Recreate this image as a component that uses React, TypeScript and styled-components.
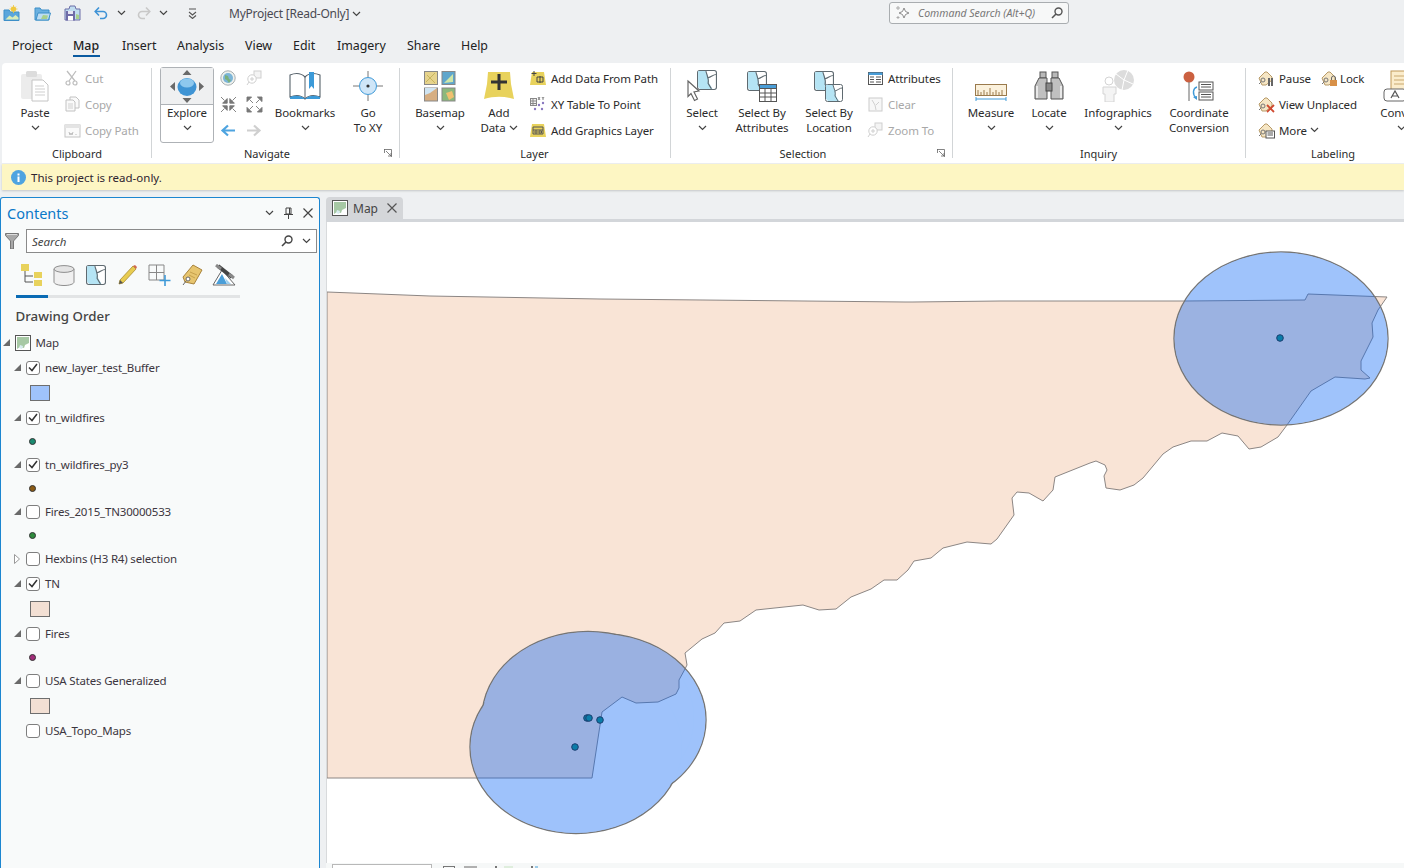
import React from "react";
import styled, { createGlobalStyle } from "styled-components";

const Global = createGlobalStyle`
  html, body { margin: 0; padding: 0; overflow: hidden; background: #eef0f2; }
  body { font-family: "Noto Sans", "Open Sans", Arial, sans-serif; font-size: 12px; color: #333; }
`;

const Page = styled.div`
  width: 1404px; height: 868px; overflow: hidden; display: flex; flex-direction: column; background: #eef0f2;
`;
const TitleBar = styled.div`
  height: 28px; display: grid; grid-template-columns: 229px 660px 180px; align-items: center; flex: none;
`;
const Qat = styled.div`display: flex; align-items: center; padding-left: 3px; margin-top: -2px;`;
const QatSlot = styled.div<{ $w: number }>`width: ${p => p.$w}px; display: flex; align-items: center; height: 20px;`;
const ProjectTitle = styled.div`display: flex; align-items: center; gap: 3px; color: #4a4a52; font-size: 12px; letter-spacing: -0.25px; margin-top: -1px;`;
const CommandSearch = styled.div`
  height: 22px; margin-top: -3px; box-sizing: border-box; border: 1px solid #a9adb0; border-radius: 3px; background: #f7f8f8;
  display: flex; align-items: center; padding: 0 5px; gap: 7px; color: #777; font-style: italic; font-size: 10.5px;
  span { flex: 1; }
`;
const MenuBar = styled.div`height: 35px; display: flex; padding-left: 12px; flex: none;`;
const MenuTab = styled.div<{ $w: number; $active?: boolean }>`
  width: ${p => p.$w}px; height: 100%; padding-top: 9px; box-sizing: border-box; font-size: 12.4px; color: #222; position: relative;
  line-height: 18px; font-weight: ${p => (p.$active ? 500 : 400)};
  ${p => p.$active && `&::after { content: ""; position: absolute; left: 0; width: 27px; top: 27px; height: 2px; background: #0a5aa0; }`}
`;
const Ribbon = styled.div`
  height: 100px; margin-left: 2px; background: #fff; display: flex; flex: none; overflow: hidden; border-radius: 4px 0 0 0; color: #2b2b2b;
`;
const Group = styled.div<{ $w: number; $pl?: number; $last?: boolean }>`
  width: ${p => p.$w}px; flex: none; position: relative; display: flex; flex-direction: column; box-sizing: border-box;
  padding-left: ${p => p.$pl || 0}px;
  ${p => !p.$last && `&::after { content: ""; position: absolute; right: 0; top: 5px; bottom: 5px; width: 1px; background: #d2d5d7; }`}
`;
const GroupBody = styled.div`height: 83px; padding-top: 2px; box-sizing: border-box; display: flex;`;
const GroupLabel = styled.div<{ $pl?: number; $pr?: number }>`
  height: 16px; line-height: 16px; text-align: center; font-size: 11px; color: #2b2b2b;
  margin-left: ${p => (p.$pl ? -p.$pl : 0)}px; padding-right: ${p => p.$pr || 0}px;
`;
const Launcher = styled.div`position: absolute; right: 8px; top: 86px; width: 8px; height: 8px;`;
const LargeButton = styled.div<{ $w: number }>`
  width: ${p => p.$w}px; flex: none; display: flex; flex-direction: column; align-items: center; padding-top: 2px; text-align: center;
  font-size: 11.5px; line-height: 15px; color: #2b2b2b; white-space: nowrap; letter-spacing: -0.07px;
`;
const IconSlot = styled.div`height: 38px; display: flex; align-items: center; justify-content: center;`;
const ChevronRow = styled.div`height: 15px; display: flex; align-items: center; justify-content: center;`;
const InlineLabel = styled.div<{ $ml?: number }>`display: flex; align-items: center; gap: 3px; margin-left: ${p => p.$ml || 0}px;`;
const ExploreButton = styled.div`
  width: 54px; height: 76px; margin-top: 2px; box-sizing: border-box; border: 1px solid #aeb2b6; border-radius: 3px;
  display: flex; flex-direction: column; align-items: center; font-size: 11.5px; line-height: 15px; flex: none; background: #fff; letter-spacing: -0.07px;
`;
const ExploreTop = styled.div`
  width: 100%; height: 36px; background: #eff0f1; border-bottom: 1px solid #aeb2b6; display: flex; align-items: center; justify-content: center;
`;
const NavGrid = styled.div`margin-left: 1px; width: 52px; display: grid; grid-template-columns: 26px 26px; grid-auto-rows: 26px; place-items: center; flex: none;`;
const SmallCol = styled.div<{ $ml?: number }>`margin-left: ${p => p.$ml || 0}px; display: flex; flex-direction: column; flex: none;`;
const SmallRow = styled.div<{ $off?: boolean }>`
  height: 26px; display: flex; align-items: center; gap: 5px; font-size: 11.5px; letter-spacing: -0.1px; white-space: nowrap; color: ${p => (p.$off ? "#a8a8a8" : "#2b2b2b")};
`;
const SmallIcon = styled.div`width: 16px; height: 16px; display: flex; align-items: center; justify-content: center; flex: none;`;
const Notice = styled.div`
  margin: 1px 0 0 2px; height: 26px; background: #fdf6c3; display: flex; align-items: center; padding-left: 9px; gap: 5px; flex: none;
  font-size: 11.5px; color: #2e2430; box-shadow: 0 1px 2px #c4c6c8;
`;
const Body = styled.div`flex: 1; min-height: 0; display: flex; margin-top: 7px;`;
const Pane = styled.div`
  width: 320px; flex: none; box-sizing: border-box; border: 1.5px solid #1c86d0; border-bottom: none; border-radius: 3px 3px 0 0; background: #f8fafa;
  display: flex; flex-direction: column;
`;
const PaneHead = styled.div`height: 31px; display: flex; align-items: center; padding: 0 6px 2px 6px; flex: none; box-sizing: border-box;`;
const PaneTitle = styled.div`flex: 1; color: #0a78c8; font-size: 14.5px;`;
const PaneTools = styled.div`display: flex; align-items: center; gap: 10px;`;
const SearchRow = styled.div`display: flex; align-items: center; height: 24px; padding: 0 2.5px 0 4px; gap: 7px; flex: none;`;
const SearchBox = styled.div`
  flex: 1; height: 24px; box-sizing: border-box; background: #fff; border: 1px solid #8a8a8a; display: flex; align-items: center; padding: 0 5px; gap: 9px;
  font-style: italic; color: #444; font-size: 11.5px;
  span { flex: 1; }
`;
const ViewTabs = styled.div`margin: 8px 0 0 14.5px; width: 224px; height: 34px; display: flex; border-bottom: 3px solid #e2e4e5; position: relative; flex: none;
  &::after { content: ""; position: absolute; left: 0; width: 32px; bottom: -3px; height: 3px; background: #0a6bb4; }
`;
const ViewTab = styled.div`width: 32px; height: 28px; display: flex; align-items: center; justify-content: center; flex: none;`;
const PaneSection = styled.div`margin: 6px 0 0 14.5px; height: 24px; line-height: 24px; font-size: 13.3px; font-weight: 500; color: #444; flex: none;`;
const Tree = styled.div`margin-top: 2px; display: flex; flex-direction: column;`;
const Row = styled.div<{ $depth: number }>`
  height: 25px; display: flex; align-items: center; padding-left: ${p => (p.$depth ? 13 : 2)}px; font-size: 11.5px; letter-spacing: -0.18px; color: #3c3640; flex: none;
`;
const Twist = styled.div`width: 11.5px; height: 10px; display: flex; align-items: center; justify-content: flex-start; flex: none;`;
const MapIconWrap = styled.div`margin-right: 5px; flex: none;`;
const Check = styled.div`
  width: 14px; height: 14px; box-sizing: border-box; border: 1px solid #7e7e7e; border-radius: 3px; background: #fff; display: flex; align-items: center; justify-content: center; margin-right: 5.5px; flex: none;
`;
const SwatchRow = styled.div`height: 25px; display: flex; align-items: center; padding-left: 28.5px; flex: none;`;
const Swatch = styled.div<{ $c: string }>`width: 20px; height: 16px; box-sizing: border-box; border: 1px solid #6e6e6e; background: ${p => p.$c};`;
const DotRow = styled.div`height: 22px; display: flex; align-items: center; padding-left: 28px; flex: none;`;
const Dot = styled.div<{ $c: string }>`width: 7px; height: 7px; border-radius: 50%; box-sizing: border-box; border: 1px solid #333; background: ${p => p.$c};`;
const MapPane = styled.div`flex: 1; min-width: 0; margin-left: 6px; display: flex; flex-direction: column;`;
const TabStrip = styled.div`height: 25px; box-sizing: border-box; border-bottom: 3px solid #d3d6da; flex: none; display: flex;`;
const DocTab = styled.div`
  width: 77px; height: 22px; background: #d4d6d9; border-radius: 4px 4px 0 0; display: flex; align-items: center; padding: 0 6px; box-sizing: border-box; gap: 5px; color: #444; font-size: 12px;
  span { flex: 1; }
`;
const MapCanvas = styled.div`height: 641px; background: #fff; flex: none; border-left: 1px solid #d8dadc; svg { display: block; }`;
const StatusBar = styled.div`height: 24px; background: #f6f8f8; display: flex; padding: 1px 0 0 6px; flex: none;`;
const ScaleBox = styled.div`width: 100px; height: 20px; box-sizing: border-box; border: 1px solid #b8b8b8; background: #fff;`;
const StatusIcon = styled.div<{ $c: string; $w: number; $ml: number; $fill?: boolean }>`
  width: ${p => p.$w}px; height: 14px; margin: 2px 0 0 ${p => p.$ml}px; box-sizing: border-box; border: 1px solid ${p => p.$c};
  background: ${p => (p.$fill ? p.$c : "transparent")};
`;
const IcSvg = styled.svg`display: block; flex: none;`;

type IP = { w: number; h: number; children?: React.ReactNode };
const Ic = ({ w, h, children }: IP) => (
  <IcSvg width={w} height={h} viewBox={`0 0 ${w} ${h}`} fill="none">{children}</IcSvg>
);
const Chevron = ({ c = "#444" }: { c?: string }) => (
  <Ic w={9} h={6}><path d="M1 1l3.5 3.5L8 1" stroke={c} strokeWidth="1.2" /></Ic>
);
const NewProjectIcon = () => (
  <Ic w={17} h={16}>
    <path d="M1 5h5l1.5 2H16v8.5H1z" fill="#5aa6dc" stroke="#3d8fc8" />
    <circle cx="10.5" cy="4" r="2.6" fill="#f0c83c" />
    <path d="M10.5 0v8M6.5 4h8M8 1.5l5 5M13 1.5l-5 5" stroke="#f0c83c" strokeWidth=".8" />
    <path d="M2.5 14.5l4-4 3 2 3-2.5 3 2.5v2z" fill="#d8ecb8" />
  </Ic>
);
const OpenProjectIcon = () => (
  <Ic w={17} h={16}>
    <path d="M1 3h5l1.5 2H15v10H1z" fill="#6ab0e0" stroke="#3d8fc8" />
    <path d="M2 15l2-7h12.5l-2 7z" fill="#bcdcf2" stroke="#3d8fc8" />
    <path d="M9 10l5 .5-1 3.5H7z" fill="#a8d08c" />
  </Ic>
);
const SaveIcon = () => (
  <Ic w={17} h={16}>
    <path d="M1 4h4l1-3h5l1 3h4v11H1z" fill="#bfdcf0" stroke="#6d6fa8" />
    <rect x="2" y="6" width="9" height="9.5" fill="#6f6ca8" />
    <rect x="4" y="6" width="5" height="3" fill="#e6e6f4" />
    <rect x="4" y="11" width="5" height="4.5" fill="#fff" />
    <path d="M12 9l3 1v4h-3z" fill="#a8d08c" />
  </Ic>
);
const UndoIcon = ({ c, flip }: { c: string; flip?: boolean }) => (
  <Ic w={14} h={14}>
    <g transform={flip ? "translate(14 0) scale(-1 1)" : undefined}>
      <path d="M1.5 5.5H9a3.5 3.5 0 0 1 0 7H6" stroke={c} strokeWidth="1.6" />
      <path d="M5 1.5L1.2 5.5 5 9.5" stroke={c} strokeWidth="1.6" />
    </g>
  </Ic>
);
const CustomizeIcon = () => (
  <Ic w={9} h={11}><path d="M1 1h7M1 4l3.5 3L8 4M1 7.5l3.5 3 3.5-3" stroke="#555" strokeWidth="1.1" /></Ic>
);
const Sparkle = () => (
  <Ic w={16} h={15}>
    <path d="M9 3l1.5 3.5L14 8l-3.5 1.5L9 13 7.5 9.5 4 8l3.5-1.5z" stroke="#8c8c8c" fill="#fff" />
    <path d="M3 1v4M1 3h4M3 11v3M1.5 12.5h3" stroke="#aaa" />
  </Ic>
);
const SearchGlyph = ({ c = "#555" }: { c?: string }) => (
  <Ic w={12} h={12}><circle cx="7.5" cy="4.5" r="3.5" stroke={c} strokeWidth="1.4" /><path d="M5 7l-4 4" stroke={c} strokeWidth="1.6" /></Ic>
);
const PasteIcon = () => (
  <Ic w={30} h={32}>
    <rect x="1" y="4" width="21" height="25" rx="2" fill="#ececec" />
    <rect x="6" y="1" width="11" height="6" rx="1.5" fill="#dcdcdc" />
    <path d="M12 10h11l5 5v16H12z" fill="#fff" stroke="#c4c4c4" />
    <path d="M15 16h9M15 19h10M15 22h10M15 25h10" stroke="#cfcfcf" />
  </Ic>
);
const CutIcon = () => (
  <Ic w={14} h={16}>
    <path d="M2 1l8 10M11 1L4 11" stroke="#bdbdbd" strokeWidth="1.3" />
    <circle cx="3" cy="13" r="2" stroke="#bdbdbd" strokeWidth="1.2" /><circle cx="10" cy="13" r="2" stroke="#bdbdbd" strokeWidth="1.2" />
  </Ic>
);
const CopyIcon = () => (
  <Ic w={15} h={16}>
    <path d="M5 1h6l3 3v8H5z" fill="#fafafa" stroke="#c2c2c2" />
    <path d="M1 4h7l2 2v9H1z" fill="#fafafa" stroke="#c2c2c2" />
    <path d="M3 8h5M3 10h5M3 12h5" stroke="#d0d0d0" />
  </Ic>
);
const CopyPathIcon = () => (
  <Ic w={17} h={16}>
    <rect x="1" y="3" width="15" height="12" fill="#fafafa" stroke="#c4c4c4" />
    <path d="M1 3h15v3H1z" fill="#e4e4e4" /><path d="M5 10l1 3 1-2 1 2 1-3M12 12v1" stroke="#bcbcbc" />
  </Ic>
);
const ExploreIcon = () => (
  <Ic w={34} h={33}>
    <path d="M17 0l4.5 5h-9zM17 33l-4.5-5h9zM0 16.5L5 12v9zM34 16.5L29 12v9z" fill="#6a6a6a" />
    <ellipse cx="17" cy="17" rx="9.5" ry="9" fill="#3f94d4" />
    <ellipse cx="17" cy="13" rx="7" ry="4.5" fill="#8ec8ee" />
  </Ic>
);
const GlobeIcon = () => (
  <Ic w={16} h={16}>
    <circle cx="8" cy="8" r="7.2" fill="#eef2ee" stroke="#a8aeb0" />
    <circle cx="8" cy="8" r="5" fill="#7cb5d8" /><path d="M5 5l3 1 1 3 2 1-2 3-2-3-2-1z" fill="#7ab07a" />
  </Ic>
);
const ZoomOffIcon = () => (
  <Ic w={16} h={16}>
    <rect x="8" y="1" width="7" height="7" fill="#f4f4f4" stroke="#cfcfcf" />
    <circle cx="6" cy="9" r="4.2" fill="#fff" stroke="#cfcfcf" /><path d="M4 9h4M6 7v4M3 12l-2 3" stroke="#cfcfcf" />
  </Ic>
);
const ZoomArrows = ({ out }: { out?: boolean }) => (
  <Ic w={17} h={17}>
    {[0, 90, 180, 270].map(a => (
      <g key={a} transform={`rotate(${a} 8.5 8.5)`}>
        {out ? (
          <path d="M1 1h4.6L1 5.6zM3.5 3.5L7 7" fill="#777" stroke="#777" strokeWidth=".9" />
        ) : (
          <path d="M7.2 7.2H2.6L7.2 2.6zM1 1l3.5 3.5" fill="#777" stroke="#777" strokeWidth=".9" />
        )}
      </g>
    ))}
  </Ic>
);
const NavArrow = ({ c, right }: { c: string; right?: boolean }) => (
  <Ic w={16} h={13}>
    <path d={right ? "M1 6.5h12M8 1.5l5.5 5-5.5 5" : "M15 6.5H3M8 1.5l-5.5 5 5.5 5"} stroke={c} strokeWidth="2.2" />
  </Ic>
);
const BookIcon = () => (
  <Ic w={32} h={30}>
    <path d="M16 6C12 2 6 2 1 4v22c5-2 11-2 15 2 4-4 10-4 15-2V4c-5-2-11-2-15 2z" fill="#fff" stroke="#55616a" strokeWidth="1.1" />
    <path d="M16 6v22" stroke="#55616a" />
    <path d="M1 26c5-2 11-2 15 2 4-4 10-4 15-2v2H1z" fill="#3c9ad8" />
    <path d="M20 1h5v17l-2.5-3-2.5 3z" fill="#3c9ad8" />
  </Ic>
);
const GoToIcon = () => (
  <Ic w={32} h={32}>
    <path d="M16 1v6M16 25v6M1 16h6M25 16h6" stroke="#777" />
    <circle cx="16" cy="16" r="8.5" fill="#cfe6f8" stroke="#3f9ad8" />
    <circle cx="16" cy="16" r="1.6" fill="#333" />
  </Ic>
);
const BasemapIcon = () => (
  <Ic w={32} h={31}>
    <rect x=".5" y=".5" width="13" height="13" fill="#e6d38c" stroke="#888" /><path d="M2 11L11 2M3 4l8 8" stroke="#c6b45c" />
    <rect x="18" y=".5" width="13" height="13" fill="#5fa6cc" stroke="#888" /><path d="M20 12l9-9v8z" fill="#cfe6a8" />
    <rect x=".5" y="17" width="13" height="13" fill="#d6ae82" stroke="#888" /><path d="M1 24l5-2 7-5H1z" fill="#cfe4f2" />
    <rect x="18" y="17" width="13" height="13" fill="#8cb87c" stroke="#888" /><path d="M22 22l6-2 2 6-5 3z" fill="#f0c070" />
  </Ic>
);
const AddDataIcon = () => (
  <Ic w={30} h={30}>
    <path d="M4 1h22l1 12 3 15c-10-3-20-3-30 0l3-15z" fill="#e8d25c" />
    <path d="M15 3v16M7 11h16" stroke="#333" strokeWidth="3" />
  </Ic>
);
const TinyYellow = ({ kind }: { kind: number }) => (
  <Ic w={16} h={16}>
    <path d="M2 2h12l2 13H0z" fill="#e8d25c" />
    {kind === 0 && <path d="M4 1v5M1.5 3.5h5M7 7h6v5H7zM10 6v7" stroke="#444" />}
    {kind === 1 && <g><path d="M3 5h10v7H3zM3 8h10" stroke="#555" /><circle cx="6" cy="10" r="1.2" stroke="#555" /><path d="M9 9h2.5v2H9z" stroke="#555" /></g>}
  </Ic>
);
const XYIcon = () => (
  <Ic w={16} h={16}>
    <rect x="0.5" y="2.5" width="6" height="7" fill="#f0f0f0" stroke="#888" /><path d="M.5 5h6M.5 7.5h6M3 2.5v7" stroke="#888" />
    <circle cx="9" cy="9" r="1.2" fill="#8a78c0" /><circle cx="13" cy="7" r="1.2" fill="#8a78c0" /><circle cx="5" cy="13" r="1.2" fill="#8a78c0" /><circle cx="12" cy="13" r="1.2" fill="#8a78c0" />
    <path d="M8 1l2 3M10 1L8 4M12 1l1 1.5 1-1.5M13 2.5V4" stroke="#666" strokeWidth=".8" />
  </Ic>
);
const MiniMap = ({ s = 18, x = 0, y = 0 }: { s?: number; x?: number; y?: number }) => (
  <g transform={`translate(${x} ${y}) scale(${s / 18})`}>
    <rect x=".5" y=".5" width="17" height="17" rx="2" fill="#fff" stroke="#5f6a70" />
    <path d="M1 1h7l2 5 1 6 3 5H3l-2-2z" fill="#b5e4f4" />
    <path d="M8 1c1 4 3 7 2 11l3 5M10 7c3-1 5-3 7-3" stroke="#5f6a70" />
  </g>
);
const SelectIcon = () => (
  <Ic w={30} h={32}>
    <MiniMap s={20} x={10} y={0} />
    <path d="M1 11l11 10-5 1 3.5 7-3 1.5-3.5-7-3 3z" fill="#fff" stroke="#666" strokeWidth="1.2" />
  </Ic>
);
const TableMini = ({ x, y }: { x: number; y: number }) => (
  <g transform={`translate(${x} ${y})`}>
    <rect x=".5" y=".5" width="17" height="17" fill="#fff" stroke="#555" />
    <rect x=".5" y=".5" width="17" height="4" fill="#4a9ed8" stroke="#555" />
    <path d="M.5 9h17M.5 13h17M6 5v13M12 5v13" stroke="#555" />
  </g>
);
const SbaIcon = () => <Ic w={32} h={33}><MiniMap s={20} x={1} y={1} /><TableMini x={13} y={14} /></Ic>;
const SblIcon = () => <Ic w={32} h={33}><MiniMap s={20} x={1} y={1} /><MiniMap s={18} x={12} y={14} /></Ic>;
const AttributesIcon = () => (
  <Ic w={15} h={13}>
    <rect x=".5" y=".5" width="14" height="12" fill="#fff" stroke="#555" /><rect x=".5" y=".5" width="14" height="2.5" fill="#4a9ed8" />
    <path d="M2 5h4M8 5h5M2 7.5h4M8 7.5h5M2 10h4M8 10h5" stroke="#555" />
  </Ic>
);
const ClearIcon = () => (
  <Ic w={15} h={15}><rect x="1" y="1" width="13" height="13" stroke="#ccc" fill="#f7f7f7" /><path d="M4 3l3 5 1 5M8 8l3-3" stroke="#d0d0d0" /></Ic>
);
const RulerIcon = () => (
  <Ic w={32} h={30}>
    <rect x=".5" y="13.5" width="31" height="11" fill="#fbf1dc" stroke="#9a7a4c" />
    <path d="M3 24v-5M6 24v-3M9 24v-5M12 24v-3M15 24v-7M18 24v-3M21 24v-5M24 24v-3M27 24v-5" stroke="#9a7a4c" />
    <path d="M1 28h30M1 26v4M31 26v4" stroke="#3f9ad8" />
  </Ic>
);
const BinocularsIcon = () => (
  <Ic w={30} h={30}>
    <rect x="6" y="1" width="6" height="6" fill="#b8b8b8" stroke="#555" /><rect x="18" y="1" width="6" height="6" fill="#b8b8b8" stroke="#555" />
    <path d="M5 7h8v21H1V15zM25 7h-8v21h12V15z" fill="#c0c0c0" stroke="#555" />
    <rect x="12" y="12" width="6" height="8" fill="#888" stroke="#444" />
    <path d="M3 15v12M27 15v12" stroke="#e8e8e8" strokeWidth="2" />
  </Ic>
);
const InfographicsIcon = () => (
  <Ic w={32} h={32}>
    <circle cx="22" cy="10" r="10" fill="#dcdcdc" />
    <path d="M22 10L14 4M22 10l4-10M22 10l9 4M22 10l-2 10" stroke="#fff" />
    <circle cx="7" cy="11" r="4" fill="#fff" stroke="#d4d4d4" />
    <path d="M1 17h13v7h-2v8H3v-8H1z" fill="#f4f4f4" stroke="#d4d4d4" />
  </Ic>
);
const CoordIcon = () => (
  <Ic w={32} h={31}>
    <circle cx="6" cy="6" r="5.5" fill="#cb6040" /><path d="M6 11v19" stroke="#666" />
    <rect x="16" y="11" width="14" height="8" fill="#fff" stroke="#555" /><path d="M18 13.5h10M18 16h10" stroke="#555" />
    <rect x="16" y="21" width="14" height="8" fill="#fff" stroke="#555" /><path d="M18 23.5h10M18 26h10" stroke="#555" />
    <path d="M14 16c-4 1-5 7-1 11" stroke="#3f9ad8" strokeWidth="1.4" /><path d="M10 26l4 3v-4z" fill="#3f9ad8" />
  </Ic>
);
const TagIcon = ({ extra }: { extra: "pause" | "lock" | "x" | "list" }) => (
  <Ic w={17} h={17}>
    <path d="M1 8l6-6h2l5 5v3l-6 5H4z" fill="#f6e6c4" stroke="#b79a68" />
    <circle cx="5" cy="10" r="2" stroke="#777" /><path d="M3 12l-2 2" stroke="#777" />
    {extra === "pause" && <path d="M11 8v8M14 8v8" stroke="#666" strokeWidth="2" />}
    {extra === "lock" && <g><rect x="9" y="10" width="7" height="6" fill="#d89048" /><path d="M10.5 10V8a2 2 0 0 1 4 0v2" stroke="#666" /></g>}
    {extra === "x" && <path d="M9 9l7 7M16 9l-7 7" stroke="#d04a30" strokeWidth="1.8" />}
    {extra === "list" && <g><rect x="8" y="9" width="8.5" height="7" fill="#fff" stroke="#555" /><path d="M9.5 11h5.5M9.5 13h5.5" stroke="#555" /></g>}
  </Ic>
);
const ConvertIcon = () => (
  <Ic w={36} h={32}>
    <rect x="8" y="1" width="26" height="20" fill="#fbeccb" stroke="#c09858" />
    <path d="M11 6h20M11 10h20M11 14h20" stroke="#c8a870" />
    <rect x="1" y="19" width="22" height="12" rx="3" fill="#fff" stroke="#666" />
    <path d="M8 28l4-7 4 7M9.5 26h5" stroke="#555" strokeWidth="1.2" />
  </Ic>
);
const InfoBadge = () => (
  <Ic w={15} h={15}>
    <circle cx="7.5" cy="7.5" r="7.5" fill="#4ea4e0" />
    <rect x="6.5" y="6.5" width="2" height="5.5" fill="#fff" /><rect x="6.5" y="3.5" width="2" height="2" fill="#fff" />
  </Ic>
);
const LauncherIcon = () => (
  <Ic w={8} h={8}><path d="M0 .5h7.5V8M.5 0v4M2 2l5 5M4 7h3V4" stroke="#666" strokeWidth=".8" /></Ic>
);
const PinIcon = () => (
  <Ic w={9} h={12}><path d="M2 1h5v6H2zM0 7.5h9M4.5 8v4M5.5 1v6" stroke="#444" /></Ic>
);
const CloseIcon = ({ s = 10, c = "#444" }: { s?: number; c?: string }) => (
  <Ic w={s} h={s}><path d={`M.5 .5l${s - 1} ${s - 1}M${s - .5} .5l-${s - 1} ${s - 1}`} stroke={c} strokeWidth="1.2" /></Ic>
);
const FilterIcon = () => (
  <Ic w={14} h={16}><path d="M.5 .5h13v2L8.5 8v8h-3V8L.5 2.5z" fill="#a8a8a8" stroke="#777" /><path d="M2 1.5h10" stroke="#ddd" /></Ic>
);
const TreeTabIcon = () => (
  <Ic w={23} h={24}>
    <rect x="1" y="1" width="8" height="7" fill="#e8d25c" />
    <path d="M5 8v11h8M5 13h8" stroke="#555" />
    <rect x="14" y="9" width="8" height="6" fill="#e8d25c" /><rect x="14" y="17" width="8" height="6" fill="#e8d25c" />
  </Ic>
);
const CylinderIcon = () => (
  <Ic w={22} h={21}>
    <path d="M1 4v13c0 2 4.5 3.5 10 3.5S21 19 21 17V4" fill="#f0f0f0" stroke="#8e8e8e" />
    <ellipse cx="11" cy="4" rx="10" ry="3.4" fill="#e4e4e4" stroke="#8e8e8e" />
  </Ic>
);
const PencilIcon = () => (
  <Ic w={21} h={22}>
    <path d="M3 16L16 2l3 3L6 19l-4 1z" fill="#e8cc50" stroke="#a88c30" strokeWidth=".8" />
    <path d="M16 2l3 3 1-2-2-2z" fill="#d06a50" /><path d="M2 20l1-4 3 3z" fill="#555" />
  </Ic>
);
const AddGridIcon = () => (
  <Ic w={24} h={23}>
    <path d="M1 1h15v15H1zM1 8.5h15M8.5 1v15" stroke="#888" />
    <path d="M17 11v11M11.5 16.5h11" stroke="#3f9ad8" strokeWidth="1.6" />
  </Ic>
);
const LabelTabIcon = () => (
  <Ic w={22} h={23}>
    <path d="M12 1l9 5-8 14-9-2-2-5z" fill="#e7c56e" stroke="#a8833c" />
    <path d="M9 8l7 3M8 11l6 3" stroke="#c6a04c" /><circle cx="7" cy="15" r="2" fill="#fff" stroke="#666" /><path d="M5 17l-3 4" stroke="#666" />
  </Ic>
);
const SatelliteIcon = () => (
  <Ic w={24} h={22}>
    <path d="M1 21L10 6l13 15z" fill="#fff" stroke="#666" />
    <path d="M4 20l6-10 5 10z" fill="#4a9ed8" /><path d="M15 20l-2-6 6 6z" fill="#9fd0ee" />
    <path d="M6 2l14 11" stroke="#444" strokeWidth="4" /><path d="M4 1l5 4M17 10l5 4" stroke="#888" strokeWidth="3" />
  </Ic>
);
const MapThumb = () => (
  <Ic w={16} h={16}>
    <rect x=".5" y=".5" width="15" height="15" fill="#fff" stroke="#555" />
    <path d="M2 2h12v6l-4 2-1 3-4-1-3 2z" fill="#a6c8a4" /><path d="M5 10l3 1-1 3-3-1z" fill="#d8ecf0" />
  </Ic>
);
const TwistOpen = () => <Ic w={7} h={7}><path d="M7 0v7H0z" fill="#6a6a6a" /></Ic>;
const TwistClosed = () => <Ic w={6} h={10}><path d="M.5 .5l5 4.5-5 4.5z" fill="#fff" stroke="#999" /></Ic>;
const Tick = () => <Ic w={10} h={9}><path d="M1 4.5l3 3L9 1" stroke="#333" strokeWidth="1.5" /></Ic>;

type Layer = { name: string; on?: boolean; twist?: "open" | "closed" | "none"; sw?: string; dot?: string };
const layers: Layer[] = [
  { name: "new_layer_test_Buffer", on: true, sw: "#9fc3fb" },
  { name: "tn_wildfires", on: true, dot: "#1a8a70" },
  { name: "tn_wildfires_py3", on: true, dot: "#8a5a14" },
  { name: "Fires_2015_TN30000533", dot: "#2e8a3c" },
  { name: "Hexbins (H3 R4) selection", twist: "closed" },
  { name: "TN", on: true, sw: "#f3e0d4" },
  { name: "Fires", dot: "#a02c78" },
  { name: "USA States Generalized", sw: "#f3e0d4" },
  { name: "USA_Topo_Maps", twist: "none" },
];
const tnPoints =
  "327,292 430,296 600,299 905,302 913,302 1000,301 1185,301 1305,300 1308,294 1387,297 1378,310 1372,323 1373,337 1361,361 1361,370 1370,378 1365,379 1335,377 1311,391 1287,425 1278,437 1261,447 1249,449 1238,436 1222,433 1207,441 1191,441 1173,447 1163,454 1143,478 1134,485 1120,490 1106,488 1104,476 1107,470 1105,465 1096,461 1090,463 1055,477 1053,490 1043,501 1029,493 1017,492 1012,498 1014,515 997,539 991,544 967,542 943,548 931,558 914,561 908,570 897,580 884,580 871,589 851,597 836,609 819,610 803,605 756,610 740,621 724,623 715,633 702,639 685,653 687,665 685,669 679,680 679,688 676,694 658,702 636,703 622,697 602,712 592,778 457,778 327,778";
const buffers = [
  { cx: 1281, cy: 338.5, rx: 107 },
  { cx: 600, cy: 720, rx: 106 },
  { cx: 588, cy: 718, rx: 106 },
  { cx: 576, cy: 747, rx: 106 },
];
const fires = [[1280, 338], [600, 720], [587, 718], [589, 718], [575, 747]];

const App = () => (
  <Page>
    <Global />
    <TitleBar>
      <Qat>
        <QatSlot $w={31}><NewProjectIcon /></QatSlot>
        <QatSlot $w={30}><OpenProjectIcon /></QatSlot>
        <QatSlot $w={30}><SaveIcon /></QatSlot>
        <QatSlot $w={23}><UndoIcon c="#3f93d6" /></QatSlot>
        <QatSlot $w={21}><Chevron /></QatSlot>
        <QatSlot $w={22}><UndoIcon c="#c8c8c8" flip /></QatSlot>
        <QatSlot $w={29}><Chevron /></QatSlot>
        <QatSlot $w={41}><CustomizeIcon /></QatSlot>
      </Qat>
      <ProjectTitle>MyProject [Read-Only] <Chevron /></ProjectTitle>
      <CommandSearch><Sparkle /><span>Command Search (Alt+Q)</span><SearchGlyph /></CommandSearch>
    </TitleBar>
    <MenuBar>
      <MenuTab $w={61}>Project</MenuTab>
      <MenuTab $w={49} $active>Map</MenuTab>
      <MenuTab $w={55}>Insert</MenuTab>
      <MenuTab $w={68}>Analysis</MenuTab>
      <MenuTab $w={48}>View</MenuTab>
      <MenuTab $w={44}>Edit</MenuTab>
      <MenuTab $w={70}>Imagery</MenuTab>
      <MenuTab $w={54}>Share</MenuTab>
      <MenuTab $w={50}>Help</MenuTab>
    </MenuBar>
    <Ribbon>
      <Group $w={150} $pl={10}>
        <GroupBody>
          <LargeButton $w={46}>
            <IconSlot><PasteIcon /></IconSlot>Paste<ChevronRow><Chevron /></ChevronRow>
          </LargeButton>
          <SmallCol $ml={6}>
            <SmallRow $off><SmallIcon><CutIcon /></SmallIcon>Cut</SmallRow>
            <SmallRow $off><SmallIcon><CopyIcon /></SmallIcon>Copy</SmallRow>
            <SmallRow $off><SmallIcon><CopyPathIcon /></SmallIcon>Copy Path</SmallRow>
          </SmallCol>
        </GroupBody>
        <GroupLabel $pl={10}>Clipboard</GroupLabel>
      </Group>
      <Group $w={248} $pl={8}>
        <GroupBody>
          <ExploreButton>
            <ExploreTop><ExploreIcon /></ExploreTop>
            Explore
            <ChevronRow><Chevron /></ChevronRow>
          </ExploreButton>
          <NavGrid>
            <GlobeIcon /><ZoomOffIcon />
            <ZoomArrows /><ZoomArrows out />
            <NavArrow c="#4ea4e0" /><NavArrow c="#cfcfcf" right />
          </NavGrid>
          <LargeButton $w={76}><IconSlot><BookIcon /></IconSlot>Bookmarks<ChevronRow><Chevron /></ChevronRow></LargeButton>
          <LargeButton $w={50}><IconSlot><GoToIcon /></IconSlot>Go<br />To XY</LargeButton>
        </GroupBody>
        <GroupLabel $pl={8} $pr={18}>Navigate</GroupLabel>
        <Launcher><LauncherIcon /></Launcher>
      </Group>
      <Group $w={271}>
        <GroupBody>
          <LargeButton $w={80}><IconSlot><BasemapIcon /></IconSlot>Basemap<ChevronRow><Chevron /></ChevronRow></LargeButton>
          <LargeButton $w={38}>
            <IconSlot><AddDataIcon /></IconSlot>Add
            <InlineLabel>Data<Chevron /></InlineLabel>
          </LargeButton>
          <SmallCol $ml={12}>
            <SmallRow><SmallIcon><TinyYellow kind={0} /></SmallIcon>Add Data From Path</SmallRow>
            <SmallRow><SmallIcon><XYIcon /></SmallIcon>XY Table To Point</SmallRow>
            <SmallRow><SmallIcon><TinyYellow kind={1} /></SmallIcon>Add Graphics Layer</SmallRow>
          </SmallCol>
        </GroupBody>
        <GroupLabel $pr={2}>Layer</GroupLabel>
      </Group>
      <Group $w={282}>
        <GroupBody>
          <LargeButton $w={62}><IconSlot><SelectIcon /></IconSlot>Select<ChevronRow><Chevron /></ChevronRow></LargeButton>
          <LargeButton $w={58}><IconSlot><SbaIcon /></IconSlot>Select By<br />Attributes</LargeButton>
          <LargeButton $w={76}><IconSlot><SblIcon /></IconSlot>Select By<br />Location</LargeButton>
          <SmallCol>
            <SmallRow><SmallIcon><AttributesIcon /></SmallIcon>Attributes</SmallRow>
            <SmallRow $off><SmallIcon><ClearIcon /></SmallIcon>Clear</SmallRow>
            <SmallRow $off><SmallIcon><ZoomOffIcon /></SmallIcon>Zoom To</SmallRow>
          </SmallCol>
        </GroupBody>
        <GroupLabel $pr={18}>Selection</GroupLabel>
        <Launcher><LauncherIcon /></Launcher>
      </Group>
      <Group $w={293}>
        <GroupBody>
          <LargeButton $w={76}><IconSlot><RulerIcon /></IconSlot>Measure<ChevronRow><Chevron /></ChevronRow></LargeButton>
          <LargeButton $w={40}><IconSlot><BinocularsIcon /></IconSlot>Locate<ChevronRow><Chevron /></ChevronRow></LargeButton>
          <LargeButton $w={98}><IconSlot><InfographicsIcon /></IconSlot>Infographics<ChevronRow><Chevron /></ChevronRow></LargeButton>
          <LargeButton $w={64}><IconSlot><CoordIcon /></IconSlot>Coordinate<br />Conversion</LargeButton>
        </GroupBody>
        <GroupLabel $pr={2}>Inquiry</GroupLabel>
      </Group>
      <Group $w={174} $pl={12} $last>
        <GroupBody>
          <SmallCol>
            <SmallRow><SmallIcon><TagIcon extra="pause" /></SmallIcon>Pause<InlineLabel $ml={5}><SmallIcon><TagIcon extra="lock" /></SmallIcon>Lock</InlineLabel></SmallRow>
            <SmallRow><SmallIcon><TagIcon extra="x" /></SmallIcon>View Unplaced</SmallRow>
            <SmallRow><SmallIcon><TagIcon extra="list" /></SmallIcon><InlineLabel>More<Chevron /></InlineLabel></SmallRow>
          </SmallCol>
          <SmallCol $ml={9}>
            <LargeButton $w={56}><IconSlot><ConvertIcon /></IconSlot>Convert<ChevronRow><Chevron /></ChevronRow></LargeButton>
          </SmallCol>
        </GroupBody>
        <GroupLabel $pl={12}>Labeling</GroupLabel>
      </Group>
    </Ribbon>
    <Notice><InfoBadge />This project is read-only.</Notice>
    <Body>
      <Pane>
        <PaneHead>
          <PaneTitle>Contents</PaneTitle>
          <PaneTools><Chevron /><PinIcon /><CloseIcon /></PaneTools>
        </PaneHead>
        <SearchRow>
          <FilterIcon />
          <SearchBox><span>Search</span><SearchGlyph c="#444" /><Chevron /></SearchBox>
        </SearchRow>
        <ViewTabs>
          <ViewTab><TreeTabIcon /></ViewTab>
          <ViewTab><CylinderIcon /></ViewTab>
          <ViewTab><Ic w={20} h={20}><MiniMap s={20} /></Ic></ViewTab>
          <ViewTab><PencilIcon /></ViewTab>
          <ViewTab><AddGridIcon /></ViewTab>
          <ViewTab><LabelTabIcon /></ViewTab>
          <ViewTab><SatelliteIcon /></ViewTab>
        </ViewTabs>
        <PaneSection>Drawing Order</PaneSection>
        <Tree>
          <Row $depth={0}><Twist><TwistOpen /></Twist><MapIconWrap><MapThumb /></MapIconWrap>Map</Row>
          {layers.map(l => (
            <React.Fragment key={l.name}>
              <Row $depth={1}>
                <Twist>{l.twist === "closed" ? <TwistClosed /> : l.twist === "none" ? null : <TwistOpen />}</Twist>
                <Check>{l.on && <Tick />}</Check>
                {l.name}
              </Row>
              {l.sw && <SwatchRow><Swatch $c={l.sw} /></SwatchRow>}
              {l.dot && <DotRow><Dot $c={l.dot} /></DotRow>}
            </React.Fragment>
          ))}
        </Tree>
      </Pane>
      <MapPane>
        <TabStrip>
          <DocTab><MapThumb /><span>Map</span><CloseIcon s={10} c="#555" /></DocTab>
        </TabStrip>
        <MapCanvas>
          <svg width={1077} height={641} viewBox="327 222 1077 641">
            <defs>
              <mask id="outer" maskUnits="userSpaceOnUse" x="327" y="222" width="1077" height="641">
                <rect x="327" y="222" width="1077" height="641" fill="#fff" />
                {buffers.map((b, i) => <ellipse key={i} cx={b.cx} cy={b.cy} rx={b.rx - 0.6} ry={85.9} fill="#000" />)}
              </mask>
            </defs>
            <polygon points={tnPoints} fill="#f9e4d6" stroke="#8c8684" strokeWidth="1" strokeLinejoin="round" />
            <g opacity="0.38">
              {buffers.map((b, i) => <ellipse key={i} cx={b.cx} cy={b.cy} rx={b.rx} ry={86.5} fill="#0261f5" />)}
            </g>
            <g mask="url(#outer)">
              {buffers.map((b, i) => <ellipse key={i} cx={b.cx} cy={b.cy} rx={b.rx} ry={86.5} fill="none" stroke="#757575" strokeWidth="1.4" />)}
            </g>
            {fires.map(([x, y], i) => <circle key={i} cx={x} cy={y} r={3.3} fill="#0a7ca8" stroke="#1a3e70" />)}
          </svg>
        </MapCanvas>
        <StatusBar>
          <ScaleBox />
          <StatusIcon $c="#777" $w={12} $ml={11} />
          <StatusIcon $c="#b0b0b0" $w={13} $ml={9} $fill />
          <StatusIcon $c="#777" $w={1} $ml={18} />
          <StatusIcon $c="#dfeedd" $w={9} $ml={7} $fill />
          <StatusIcon $c="#777" $w={1} $ml={18} />
          <StatusIcon $c="#9ccbe8" $w={3} $ml={2} $fill />
        </StatusBar>
      </MapPane>
    </Body>
  </Page>
);

export default App;
